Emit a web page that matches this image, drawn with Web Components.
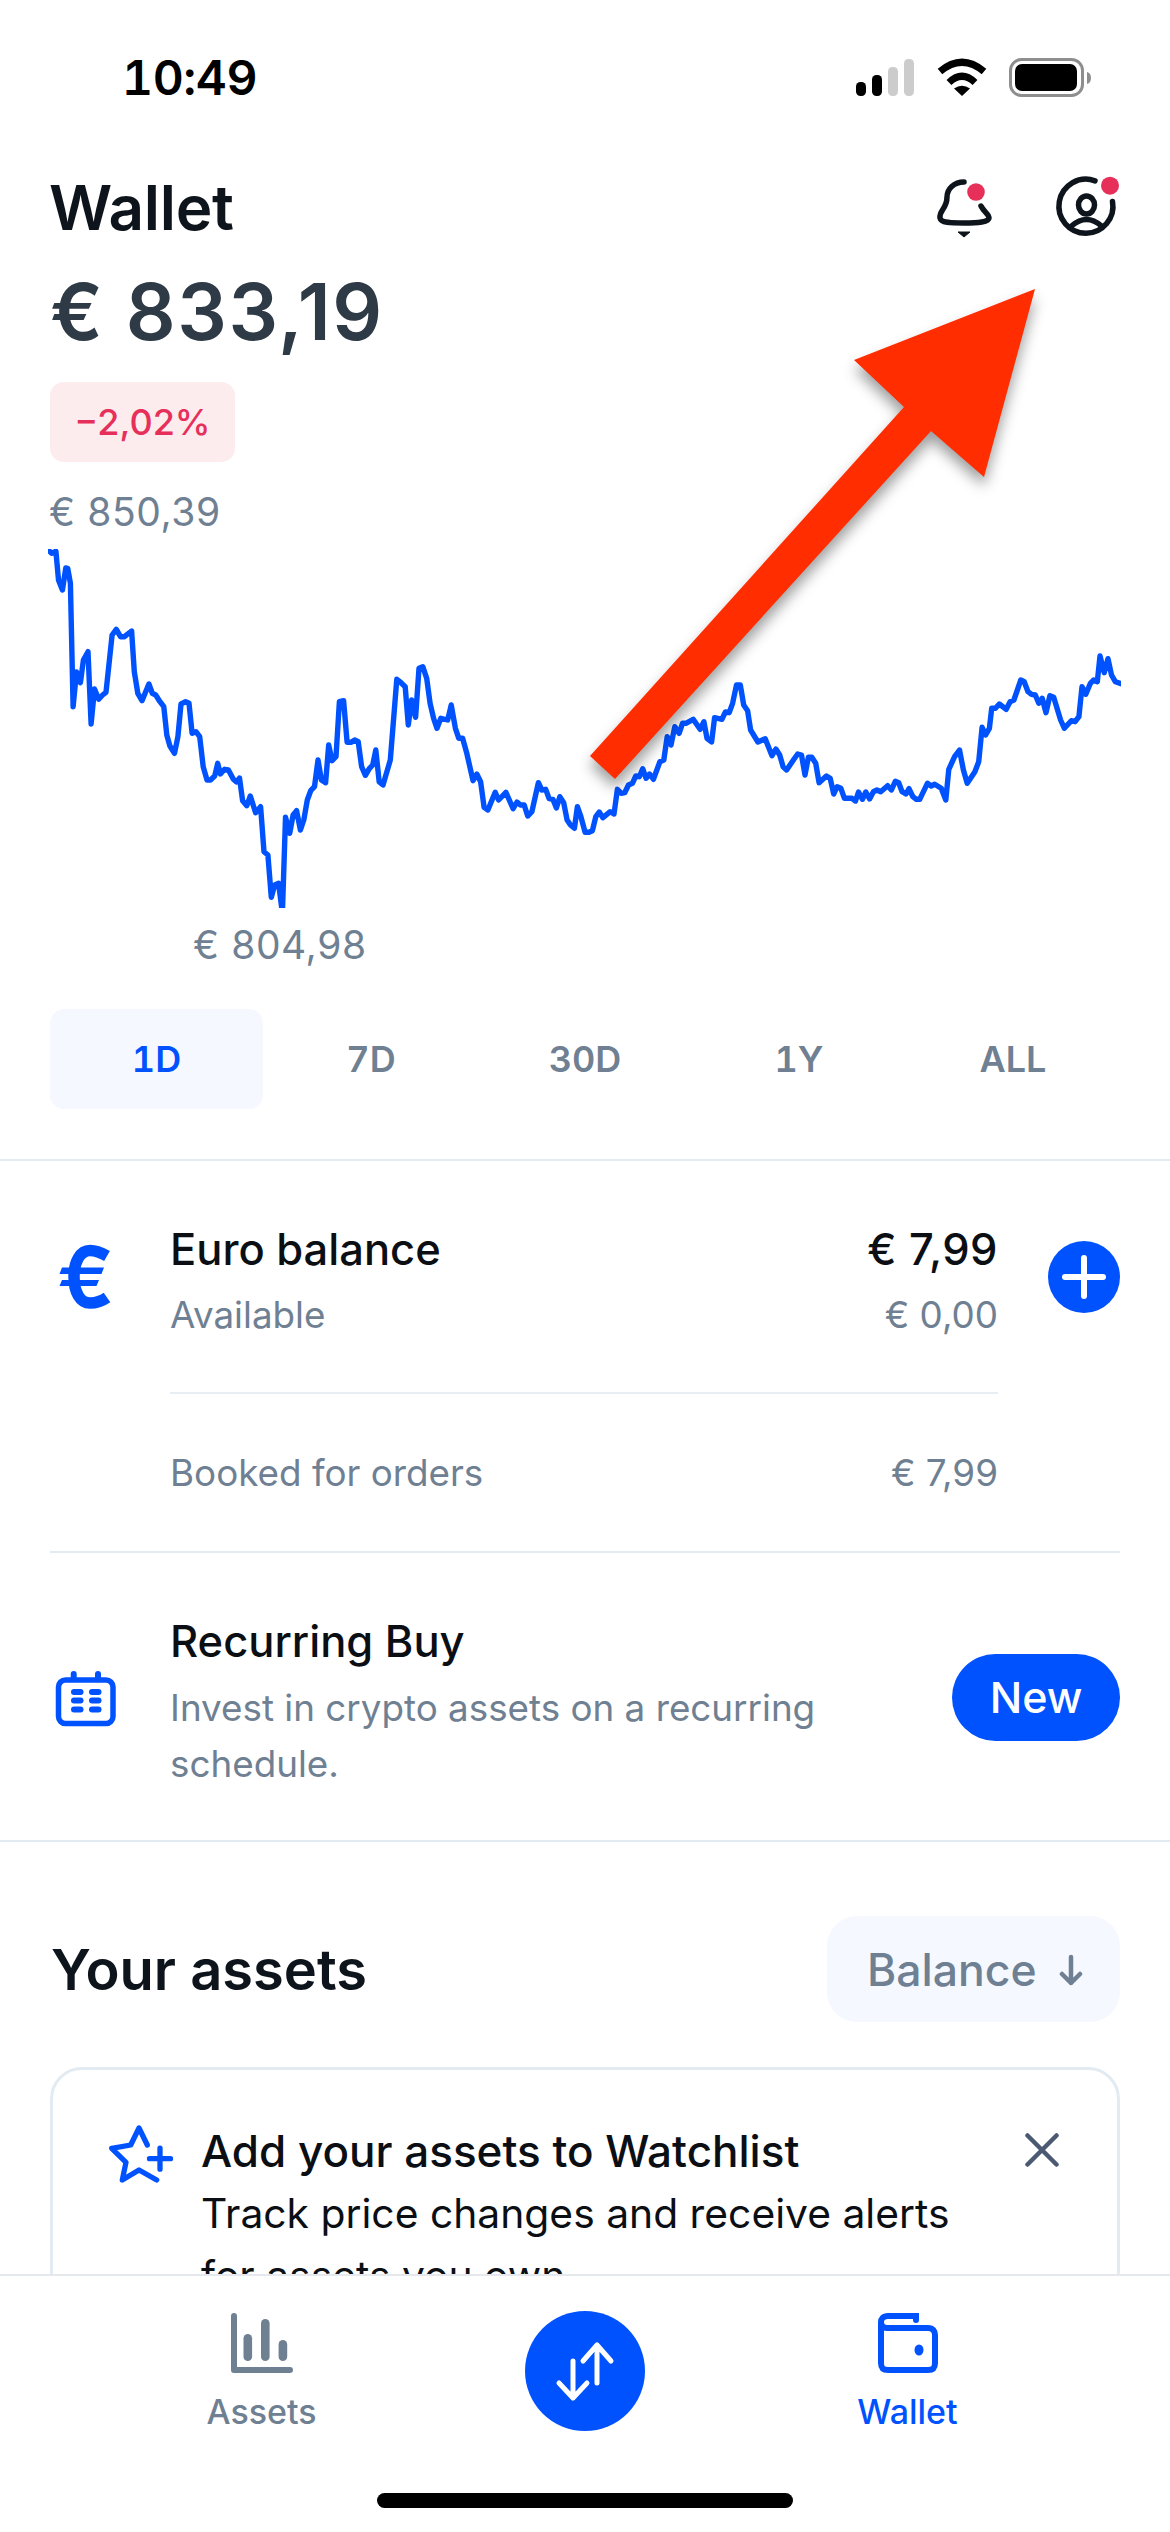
<!DOCTYPE html>
<html lang="en"><head><meta charset="utf-8"><title>Wallet</title>
<style>
html,body{margin:0;padding:0;background:#fff}
body{width:1170px;height:2532px;overflow:hidden;position:relative;font-family:Inter,"Liberation Sans",sans-serif;display:flex;flex-direction:column}
main{display:block;height:2274px;overflow:hidden;flex:none}
</style></head><body>
<main>
<status-bar></status-bar>
<wallet-header></wallet-header>
<price-chart></price-chart>
<range-tabs></range-tabs>
<balance-card></balance-card>
<recurring-row></recurring-row>
<assets-section></assets-section>
</main>
<bottom-nav></bottom-nav>
<arrow-mark></arrow-mark>
<script>
function def(name, html){
  customElements.define(name, class extends HTMLElement{
    constructor(){super();this.attachShadow({mode:'open'}).innerHTML=html;}
  });
}
def('status-bar',`<style>
:host{display:flex;height:156px;align-items:center;box-sizing:border-box;padding-left:122px;color:#000}
.t{font:600 48px/1 Inter,"Liberation Sans",sans-serif;font-variant-numeric:tabular-nums;letter-spacing:-.4px;width:734px}
svg{display:block}
</style><div class="t">10:49</div>
<svg width="250" height="44" viewBox="856 56 250 44">
<rect x="856" y="82" width="10" height="14" rx="4.5"/><rect x="872" y="75" width="10" height="21" rx="4.5"/>
<rect x="888" y="67" width="10" height="29" rx="4.5" fill="#ccc"/><rect x="904" y="59" width="10" height="37" rx="4.5" fill="#ccc"/>
<g transform="translate(937 59)"><path d="M3 12.5Q25-6 47 12.5" fill="none" stroke="#000" stroke-width="7"/><path d="M12 23.5Q25 11 38 23.5" fill="none" stroke="#000" stroke-width="7"/><path d="M17 29.5Q25 24 33 29.5L25 37Z"/></g>
<rect x="1010.5" y="59.500" width="72" height="36" rx="11" fill="none" stroke="#8e8e8e" stroke-width="3"/>
<rect x="1015" y="64" width="62" height="27" rx="7"/>
<path d="M1087 72Q1091 73 1091 78Q1091 83 1087 84Z" fill="#8e8e8e"/>
</svg>`);
def('wallet-header',`<style>
:host{display:block;padding:0 50px}
.r{display:flex;height:104px}
h1{margin:0 0 0 -1px;font:600 62px/104px Inter,"Liberation Sans",sans-serif;color:#0e141b;flex:1;letter-spacing:-.3px}
svg{display:block;margin-top:4px;flex:none}
.am{font:600 78px/90px Inter,"Liberation Sans",sans-serif;color:#2f3a47;margin-top:7px;letter-spacing:1.6px}
.p{display:flex;align-items:center;justify-content:center;width:185px;height:80px;margin-top:25px;border-radius:14px;background:#fdecee;color:#e6305a;font:500 36px/1 Inter,"Liberation Sans",sans-serif}
</style><div class="r"><h1>Wallet</h1>
<svg width="100" height="90" viewBox="0 0 100 90"><path d="M44 22C34 22 27 29 27 37C27 49 19 50 20 58C21 63 30 63 44 63C58 63 69 62 69 58C69 54 64 52 61 46" fill="none" stroke="#0e141b" stroke-width="5.500" stroke-linecap="round"/><path d="M38 72H50L44 77Z" fill="#0e141b" stroke="#0e141b" stroke-linejoin="round"/><circle cx="56" cy="32" r="8.800" fill="#e6305a"/></svg>
<svg width="120" height="90" viewBox="100 0 120 90" style="margin-right:-20px"><path d="M175 20.800A27 27 0 1 0 192.500 41.500" fill="none" stroke="#0e141b" stroke-width="5.500" stroke-linecap="round"/><ellipse cx="166.500" cy="45" rx="8" ry="9" fill="none" stroke="#0e141b" stroke-width="5.500"/><path d="M151.500 66Q166.500 53 181.500 66" fill="none" stroke="#0e141b" stroke-width="5.500" stroke-linecap="round"/><circle cx="190" cy="25.700" r="9" fill="#e6305a"/></svg>
</div>
<div class="am">€ 833,19</div>
<div class="p">−2,02%</div>`);
const A=[[128,152],[135,160],[146,154],[153,240],[163,270],[172,204],[177,205],[184,250],[191,620],[200,516],[210,548],[218,480],[230,455],[238,672],[247,567],[258,598],[268,585],[277,577],[293,405],[304,388],[315,410],[325,410],[344,393],[351,515],[360,580],[371,602],[389,552],[398,580],[407,585],[418,605],[428,620],[436,705],[444,738],[456,760],[465,710],[473,612],[485,605],[494,610],[502,700],[512,695],[522,710],[531,800],[541,840],[550,840],[561,828],[569,790],[576,822],[587,808],[597,810],[610,838],[618,846],[626,834],[634,902],[645,917],[654,888],[668,938],[681,920],[690,1055],[700,1065],[709,1192],[718,1155],[728,1150],[738,1240],[746,952],[757,1000],[766,945],[775,932],[785,990],[794,960],[803,900],[812,872],[822,860],[831,780],[840,840],[851,848],[859,735],[868,782],[878,770],[887,605],[898,602],[907,727],[918,727],[927,720],[936,725],[945,800],[955,826],[965,806],[974,795],[982,750],[991,846],[1001,855],[1020,780],[1037,538],[1048,548],[1059,560],[1067,675],[1076,600],[1086,652],[1095,505],[1105,500],[1115,535],[1124,610],[1133,655],[1142,685],[1152,655],[1170,660],[1179,615],[1190,685],[1199,715],[1209,715],[1220,760],[1236,842],[1246,822],[1256,845],[1265,922],[1275,930],[1294,877],[1303,900],[1322,877],[1341,926],[1351,906],[1360,915],[1370,915],[1379,948],[1390,935],[1407,848],[1416,870],[1426,868],[1435,896],[1445,898],[1454,924],[1463,890],[1473,908],[1482,960],[1491,975],[1501,985],[1509,920],[1518,950],[1529,997],[1539,997],[1548,992],[1557,950],[1566,936]];
const B=[[86,953],[105,935],[115,942],[124,868],[134,880],[143,878],[153,855],[163,850],[172,828],[181,830],[190,806],[199,835],[208,822],[218,838],[235,785],[245,780],[254,710],[264,735],[274,680],[285,700],[294,670],[303,670],[322,658],[340,688],[350,665],[358,715],[370,726],[378,653],[397,658],[406,636],[416,638],[425,610],[435,555],[445,555],[454,615],[464,632],[472,690],[491,726],[510,716],[528,767],[538,747],[548,765],[557,800],[566,810],[585,778],[595,762],[605,765],[614,825],[623,772],[632,772],[642,790],[651,848],[670,828],[680,835],[689,882],[698,860],[708,865],[717,895],[737,895],[746,903],[754,876],[764,898],[773,876],[783,897],[793,875],[802,870],[812,875],[830,857],[840,870],[850,844],[859,848],[868,875],[878,882],[886,866],[896,890],[905,898],[914,898],[934,850],[944,858],[953,853],[970,865],[982,900],[990,808],[1005,770],[1018,750],[1028,810],[1038,850],[1058,815],[1068,785],[1077,682],[1086,705],[1096,685],[1102,625],[1112,625],[1122,612],[1140,628],[1150,605],[1160,600],[1178,540],[1187,545],[1197,575],[1206,583],[1216,585],[1225,610],[1234,595],[1244,638],[1254,587],[1264,592],[1282,660],[1292,685],[1310,662],[1320,665],[1330,650],[1338,560],[1348,583],[1360,550],[1368,540],[1378,545],[1385,468],[1396,518],[1406,476],[1415,525],[1425,545],[1442,552]];
const pts=A.map(p=>[p[0]/2.6133,500+p[1]/3]).concat(B.map(p=>[570+p[0]/2.6133,500+p[1]/3]));
const d='M'+pts.map(p=>p[0].toFixed(1)+' '+p[1].toFixed(1)).join('L');
def('price-chart',`<style>
:host{display:block;height:483px;color:#6f8093;font:400 39px/50px Inter,"Liberation Sans",sans-serif;letter-spacing:.6px}
.hi{margin:25px 0 0 49px;height:50px}
svg{display:block}
.lo{margin-left:193px;height:50px}
</style><div class="hi">€ 850,39</div>
<svg width="1170" height="383" viewBox="0 537 1170 383"><defs><clipPath id="c"><rect x="48" y="549" width="1073" height="359"/></clipPath></defs><path clip-path="url(#c)" d="${d}" fill="none" stroke="#0052ff" stroke-width="5.400" stroke-linejoin="round" stroke-linecap="round"/></svg>
<div class="lo">€ 804,98</div>`);
def('range-tabs',`<style>
:host{display:grid;grid-template-columns:repeat(5,1fr);height:100px;margin:39px 50px 0;font:600 36px/100px Inter,"Liberation Sans",sans-serif;font-variant-numeric:tabular-nums;color:#6f8093;text-align:center}
.on{background:#f5f8ff;color:#0052ff;border-radius:14px;width:213px}
</style><div class="on">1D</div><div>7D</div><div>30D</div><div>1Y</div><div>ALL</div>`);
def('balance-card',`<style>
:host{display:block;margin-top:50px;border-top:2px solid #e2ebf2;padding:58px 50px 0}
.c{display:flex;align-items:flex-start;color:#6f8093}
.euro{flex:none;display:block;margin:1px 30px 0 -20px}
.m{flex:1;min-width:0}
.l{display:flex;justify-content:space-between;font:400 36.800px/60px Inter,"Liberation Sans",sans-serif}
.top{font:500 43.500px/60px Inter,"Liberation Sans",sans-serif;color:#0b0f14}
.top b{font-weight:500;letter-spacing:.5px}
.av{margin-top:6px}
hr{border:0;height:2px;background:#e9eef3;margin:47px 0 49px}
.plus{flex:none;display:block;margin:22px 0 0 50px}
.end{border-top:2px solid #e2ebf2;margin-top:48px}
</style><div class="c">
<svg class="euro" width="110" height="110" viewBox="0 0 110 110" fill="#0052ff"><path d="M77 36C70 32 65 30.500 60 30.500C50 30.500 44 42 44 56.500C44 72 50 83 60 83C66 83 72 81 77 77.500" fill="none" stroke="#0052ff" stroke-width="11.500"/><path d="M32 47.500H74L71.500 54H29.500ZM32 60H69L66.500 66H29.500Z"/></svg>
<div class="m"><div class="l top"><span>Euro balance</span><b>€ 7,99</b></div><div class="l av"><span>Available</span><span>€ 0,00</span></div>
<hr><div class="l"><span>Booked for orders</span><span>€ 7,99</span></div></div>
<svg class="plus" width="72" height="72" viewBox="0 0 72 72"><circle cx="36" cy="36" r="36" fill="#0052ff"/><path d="M36 17V55M17 36H55" stroke="#fff" stroke-width="6" stroke-linecap="round"/></svg>
</div><div class="end"></div>`);
def('recurring-row',`<style>
:host{display:flex;margin:0 50px;padding:58px 0 48px;align-items:center}
svg{flex:none;display:block;margin:-11px 40px 0 -10px}
.m{flex:1;width:0}
.t{font:500 43.500px/60px Inter,"Liberation Sans",sans-serif;color:#0b0f14}
.d{font:400 36.800px/56px Inter,"Liberation Sans",sans-serif;color:#6f8093;margin-top:9px;width:680px}
.b{flex:none;width:168px;height:87px;border-radius:44px;background:#0052ff;color:#fff;font:500 43px/87px Inter,"Liberation Sans",sans-serif;text-align:center;margin-top:-9px}
</style>
<svg width="90" height="90" viewBox="0 0 90 90" fill="#0052ff"><rect x="18.500" y="29" width="54.500" height="43.500" rx="7" fill="none" stroke="#0052ff" stroke-width="5.500"/><path d="M33.700 23V28M58 23V28" stroke="#0052ff" stroke-width="6" stroke-linecap="round"/><rect x="31" y="38" width="12.500" height="6" rx="3"/><rect x="49" y="38" width="12.500" height="6" rx="3"/><rect x="31" y="46.500" width="12.500" height="6" rx="3"/><rect x="49" y="46.500" width="12.500" height="6" rx="3"/><rect x="31" y="55.500" width="12.500" height="6" rx="3"/><rect x="49" y="55.500" width="12.500" height="6" rx="3"/></svg>
<div class="m"><div class="t">Recurring Buy</div><div class="d">Invest in crypto assets on a recurring schedule.</div></div>
<div class="b">New</div>`);
def('assets-section',`<style>
:host{display:block;border-top:2px solid #e2ebf2;padding:74px 50px 0}
.h{display:flex;justify-content:space-between;align-items:center;height:106px}
h2{margin:2px 0 0 1px;font:600 56px/1 Inter,"Liberation Sans",sans-serif;color:#0e141b}
.s{box-sizing:border-box;width:293px;height:106px;border-radius:30px;background:#f5f8ff;color:#6f8093;font:500 44.500px/106px Inter,"Liberation Sans",sans-serif;padding:2px 0 0 40px;display:flex;align-items:center;gap:22px}
.s svg{display:block}
.card{margin-top:45px;border:3px solid #e2ebf2;border-radius:32px;padding:50px 0 0;display:flex;height:300px;box-sizing:border-box}
.star{flex:none;display:block;margin:-20px 0 0 37px;width:100px;height:100px}
.m{margin-left:11px;width:790px}
.t{font:500 44px/62px Inter,"Liberation Sans",sans-serif;color:#0b0f14}
.d{font:400 40.800px/62px Inter,"Liberation Sans",sans-serif;color:#0b0f14;width:770px}
.x{flex:none;display:block;margin:13px 0 0 34px}
</style><div class="h"><h2>Your assets</h2><div class="s"><span>Balance</span><svg width="24" height="32" viewBox="0 0 24 32"><path d="M12 3V29M3 20L12 29L21 20" fill="none" stroke="#6f8093" stroke-width="4.500" stroke-linecap="round" stroke-linejoin="round"/></svg></div></div>
<div class="card">
<svg class="star" viewBox="0 0 100 100" fill="none" stroke="#0052ff" stroke-width="5.300" stroke-linecap="round" stroke-linejoin="round"><path d="M57.300 45L49 28L40.700 45L21.700 48.300L36 62.300L32.300 80L49 70L66.700 80"/><path d="M59.500 58.700H80.500M70 48.200V69.200"/></svg>
<div class="m"><div class="t">Add your assets to Watchlist</div><div class="d">Track price changes and receive alerts for assets you own</div></div>
<svg class="x" width="34" height="34" viewBox="0 0 34 34"><path d="M2.500 2.500L31.500 31.500M31.500 2.500L2.500 31.500" stroke="#4b5a72" stroke-width="4.500" stroke-linecap="round"/></svg>
</div>`);
def('bottom-nav',`<style>
:host{display:block;flex:none;height:258px;box-sizing:border-box;border-top:2px solid #e5e8ec;background:#fff;padding-top:35px;font:500 34px/1 Inter,"Liberation Sans",sans-serif;color:#6f8093}
.g{display:grid;grid-template-columns:repeat(3,323px);padding-left:100px;height:120px}
.i{display:flex;flex-direction:column;align-items:center;padding-top:2px}
.i svg{display:block;margin-bottom:24px}
.i span{line-height:30px}
.w{color:#0052ff}
.c{justify-self:center;display:block}
.bar{width:416px;height:15px;border-radius:8px;background:#000;margin:62px auto 0}
</style><div class="g">
<div class="i"><svg width="62" height="60" viewBox="0 0 62 60" fill="#6f8093"><path d="M3 3V57H59" fill="none" stroke="#6f8093" stroke-width="6" stroke-linecap="round" stroke-linejoin="round"/><rect x="12.500" y="21" width="8.600" height="27" rx="4.300"/><rect x="30" y="6" width="8.600" height="42" rx="4.300"/><rect x="47.600" y="27" width="8.600" height="21" rx="4.300"/></svg><span>Assets</span></div>
<svg class="c" width="120" height="120" viewBox="0 0 120 120"><circle cx="60" cy="60" r="60" fill="#0052ff"/><path d="M48 50V87M34 72L48 87L62 72M72 72V34M58 50L72 34L86 50" fill="none" stroke="#fff" stroke-width="5" stroke-linecap="round" stroke-linejoin="round"/></svg>
<div class="i w"><svg width="60" height="60" viewBox="0 0 60 60" fill="none" stroke="#0052ff" stroke-width="6"><path d="M38 7V3H10C5 3 3 6 3 9C3 13 5 15 9 15H50C55 15 57 18 57 22V50C57 55 55 57 50 57H10C5 57 3 55 3 50V9" stroke-linecap="round"/><ellipse cx="41" cy="37" rx="4.500" ry="5.500" fill="#0052ff" stroke="none"/></svg><span>Wallet</span></div>
</div><div class="bar"></div>`);
def('arrow-mark',`<style>
:host{position:absolute;left:0;top:0;width:1170px;height:900px;pointer-events:none}
svg{display:block;overflow:visible;filter:drop-shadow(0 9px 7px rgba(0,0,0,.38))}
</style><svg width="1170" height="900" viewBox="0 0 1170 900"><path d="M1035 289L854 360L904 407 590 756L615 779L931 431L984 477Z" fill="#ff2d00"/></svg>`);
</script>
</body></html>
